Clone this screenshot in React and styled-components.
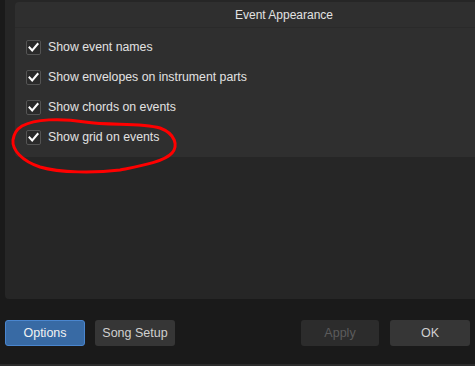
import React from 'react';
import styled, { createGlobalStyle } from 'styled-components';

const GlobalStyle = createGlobalStyle`
    html, body {
        margin: 0;
        padding: 0;
        background: #1a1a1a;
        overflow: hidden;
        font-family: "Liberation Sans", Arial, sans-serif;
    }
`;

const Window = styled.div`
    position: relative;
    width: 475px;
    height: 366px;
    display: flex;
    flex-direction: column;
    background: #1a1a1a;
    border-bottom: 2px solid #2b2b2b;
    box-sizing: border-box;
    overflow: hidden;
`;

const Panel = styled.div`
    margin-left: 5px;
    width: 558px;
    height: 299px;
    flex: none;
    box-sizing: border-box;
    padding: 2px 10px 0;
    background: #262626;
    border-radius: 0 0 4px 4px;
`;

const Group = styled.section`
    height: 155px;
    background: #2f2f2f;
    border-radius: 4px;
    display: flex;
    flex-direction: column;
`;

const GroupHeader = styled.header`
    height: 25px;
    display: flex;
    align-items: center;
    justify-content: center;
    border-bottom: 1px solid #2a2a2a;
    color: #e2e2e2;
    font-size: 12px;
`;

const GroupBody = styled.div`
    padding: 4px 11px 0;
    display: flex;
    flex-direction: column;
`;

const Row = styled.label`
    height: 30px;
    display: flex;
    align-items: center;
    gap: 7px;
    color: #e2e2e2;
    font-size: 12.3px;
`;

const Box = styled.span`
    width: 15px;
    height: 15px;
    box-sizing: border-box;
    border: 1px solid #545454;
    border-radius: 2px;
    background: #2a2a2a;
    display: flex;
    align-items: center;
    justify-content: center;
    flex: none;
`;

const Footer = styled.footer`
    display: flex;
    align-items: center;
    padding: 21px 5px 0 5px;
`;

const ButtonGroup = styled.div`
    display: flex;
    gap: ${({ gap }) => gap}px;
    margin-left: ${({ right }) => (right ? 'auto' : '0')};
`;

const Button = styled.button`
    width: ${({ w }) => w || 80}px;
    height: 26px;
    box-sizing: border-box;
    border-radius: 3px;
    font-family: inherit;
    font-size: 12.5px;
    padding: 0;
    cursor: default;
    border: 1px solid ${({ variant }) => (variant === 'primary' ? '#4a86cf' : 'transparent')};
    background: ${({ variant }) =>
        variant === 'primary' ? '#386aa4' : variant === 'disabled' ? '#2c2c2c' : '#363636'};
    color: ${({ variant }) =>
        variant === 'primary' ? '#f2f2f2' : variant === 'disabled' ? '#5c5c5c' : '#d0d0d0'};
`;

const Annotation = styled.svg`
    position: absolute;
    left: 0;
    top: 0;
    pointer-events: none;
`;

const Check = () => (
    <svg width="13" height="13" viewBox="0 0 13 13">
        <polyline
            points="2.5,6.5 5.2,9.4 10.6,3"
            fill="none"
            stroke="#ffffff"
            strokeWidth="2"
            strokeLinecap="square"
        />
    </svg>
);

const options = [
    'Show event names',
    'Show envelopes on instrument parts',
    'Show chords on events',
    'Show grid on events',
];

export default function App() {
    return (
        <Window>
            <GlobalStyle />
            <Panel>
                <Group>
                    <GroupHeader>Event Appearance</GroupHeader>
                    <GroupBody>
                        {options.map((text) => (
                            <Row key={text}>
                                <Box>
                                    <Check />
                                </Box>
                                {text}
                            </Row>
                        ))}
                    </GroupBody>
                </Group>
            </Panel>
            <Footer>
                <ButtonGroup gap={10}>
                    <Button variant="primary">Options</Button>
                    <Button>Song Setup</Button>
                </ButtonGroup>
                <ButtonGroup gap={11} right>
                    <Button variant="disabled" w={78}>Apply</Button>
                    <Button>OK</Button>
                </ButtonGroup>
            </Footer>
            <Annotation width="475" height="366">
                <path
                    d="M 22 126 C 35 119, 60 118, 85 122 S 140 122, 160 128 C 176 134, 178 146, 172 153 C 164 162, 140 166, 120 170 C 95 173, 60 173, 40 167 C 22 161, 12 150, 13 140 C 14 133, 17 129, 22 126"
                    fill="none"
                    stroke="#ff0000"
                    strokeWidth="3"
                    strokeLinecap="round"
                />
            </Annotation>
        </Window>
    );
}
